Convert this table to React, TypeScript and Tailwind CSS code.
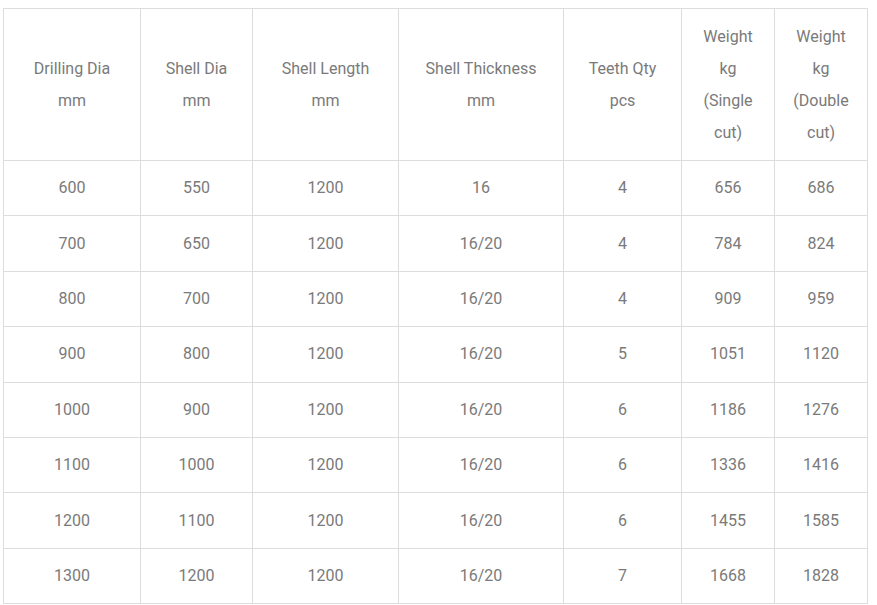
import React from "react";

const widths = [137, 112, 146, 165, 118, 93, 93];
const header = [
  ["Drilling Dia", "mm"],
  ["Shell Dia", "mm"],
  ["Shell Length", "mm"],
  ["Shell Thickness", "mm"],
  ["Teeth Qty", "pcs"],
  ["Weight", "kg", "(Single", "cut)"],
  ["Weight", "kg", "(Double", "cut)"],
];
const rows = [
  ["600", "550", "1200", "16", "4", "656", "686"],
  ["700", "650", "1200", "16/20", "4", "784", "824"],
  ["800", "700", "1200", "16/20", "4", "909", "959"],
  ["900", "800", "1200", "16/20", "5", "1051", "1120"],
  ["1000", "900", "1200", "16/20", "6", "1186", "1276"],
  ["1100", "1000", "1200", "16/20", "6", "1336", "1416"],
  ["1200", "1100", "1200", "16/20", "6", "1455", "1585"],
  ["1300", "1200", "1200", "16/20", "7", "1668", "1828"],
];

export default function App() {
  return (
    <div className="bg-white w-[877px] h-[605px] overflow-hidden pt-[8px] pl-[3px]" style={{ fontFamily: "Roboto, 'Liberation Sans', sans-serif" }}>
      <table className="border-collapse table-fixed w-[864px] text-[16px] text-[#7a7a7a]">
        <colgroup>
          {widths.map((w, i) => (
            <col key={i} style={{ width: w }} />
          ))}
        </colgroup>
        <tbody>
          <tr className="h-[152px]">
            {header.map((h, i) => (
              <td key={i} className="border border-[#dddddd] text-center align-middle leading-[32px] px-2">
                {h.map((l, j) => (
                  <div key={j}>{l}</div>
                ))}
              </td>
            ))}
          </tr>
          {rows.map((r, i) => (
            <tr key={i} className="h-[55.4px]">
              {r.map((c, j) => (
                <td key={j} className="border border-[#dddddd] text-center align-middle leading-[32px] px-2">
                  {c}
                </td>
              ))}
            </tr>
          ))}
        </tbody>
      </table>
    </div>
  );
}
